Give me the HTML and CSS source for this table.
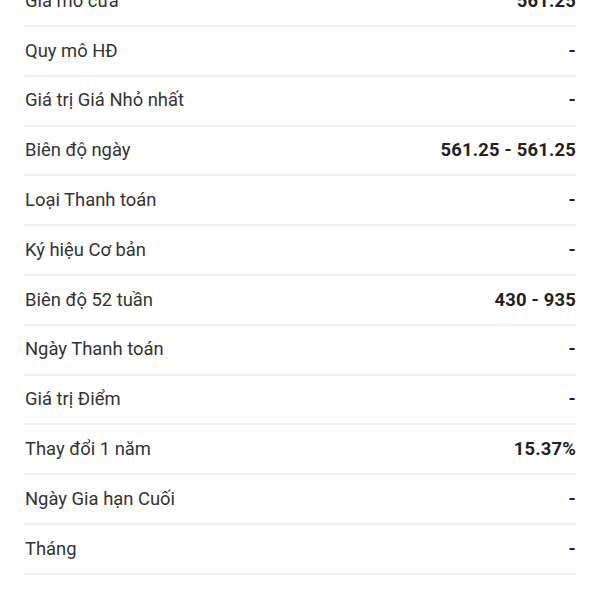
FILE: index.html
```html
<!DOCTYPE html>
<html lang="vi">
<head>
<meta charset="utf-8">
<link rel="stylesheet" href="styles.css">
</head>
<body>
<ul class="list">
  <li class="row"><span class="label">Giá mở cửa</span><span class="value">561.25</span></li>
  <li class="row"><span class="label">Quy mô HĐ</span><span class="value">-</span></li>
  <li class="row"><span class="label">Giá trị Giá Nhỏ nhất</span><span class="value">-</span></li>
  <li class="row"><span class="label">Biên độ ngày</span><span class="value">561.25 - 561.25</span></li>
  <li class="row"><span class="label">Loại Thanh toán</span><span class="value">-</span></li>
  <li class="row"><span class="label">Ký hiệu Cơ bản</span><span class="value">-</span></li>
  <li class="row"><span class="label">Biên độ 52 tuần</span><span class="value">430 - 935</span></li>
  <li class="row"><span class="label">Ngày Thanh toán</span><span class="value">-</span></li>
  <li class="row"><span class="label">Giá trị Điểm</span><span class="value">-</span></li>
  <li class="row"><span class="label">Thay đổi 1 năm</span><span class="value">15.37%</span></li>
  <li class="row"><span class="label">Ngày Gia hạn Cuối</span><span class="value">-</span></li>
  <li class="row"><span class="label">Tháng</span><span class="value">-</span></li>
</ul>
</body>
</html>
```
FILE: styles.css
```css
html, body {
  margin: 0;
  padding: 0;
  background: #ffffff;
}
body {
  font-family: Roboto, "Noto Sans", sans-serif;
  color: #333333;
  overflow: hidden;
}
.list {
  list-style: none;
  margin: -22.8px 24px 0 24px;
  padding: 0;
}
.row {
  display: flex;
  justify-content: space-between;
  align-items: center;
  height: 46.3px;
  padding-bottom: 1.5px;
  border-bottom: 2px solid #efefef;
  font-size: 18.4px;
}
.label {
  color: #333333;
  padding-left: 1px;
}
.value {
  font-weight: 700;
  color: #222222;
  letter-spacing: 0.2px;
}
```
